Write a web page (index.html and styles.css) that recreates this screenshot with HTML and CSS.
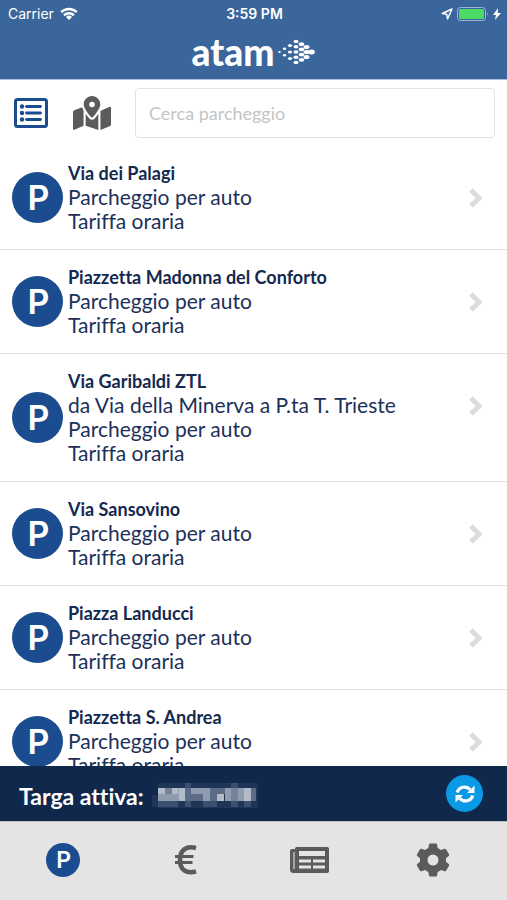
FILE: index.html
```html
<!DOCTYPE html>
<html lang="it">
<head>
<meta charset="utf-8">
<meta name="viewport" content="width=device-width, initial-scale=1">
<title>atam – Parcheggi</title>
<link rel="stylesheet" href="styles.css">
</head>
<body>
<div class="app">
  <header class="header">
    <div class="status">
      <div class="status-left"><span>Carrier</span>
        <svg width="18" height="14" viewBox="0 0 18 14" fill="none" stroke="#fff" stroke-width="2.4"><path d="M1.2 5.2a11 11 0 0 1 15.6 0M4 8.3a7 7 0 0 1 10 0"/><path d="M9 13 6 10a4.3 4.3 0 0 1 6 0z" fill="#fff" stroke="none"/></svg>
      </div>
      <strong>3:59 PM</strong>
      <div class="status-right">
        <svg width="12" height="12" viewBox="0 0 12 12" fill="none" stroke="#fff" stroke-width="1.4" stroke-linejoin="round"><path d="M11 1 1.2 5.5l4.6.8.7 4.6z"/></svg>
        <svg width="32" height="14" viewBox="0 0 32 14"><rect x=".5" y=".5" width="28" height="13" rx="3" fill="none" stroke="#9db4d2"/><rect x="2" y="2" width="25" height="10" rx="1.5" fill="#4cd964"/><path d="M30 5q1.600 2 0 4z" fill="#9db4d2"/></svg>
        <svg width="8" height="12" viewBox="0 0 8 12" fill="#fff"><path d="M5 0 0 7h3L2 12l6-7H4.700z"/></svg>
      </div>
    </div>
    <div class="brand"><span>atam</span>
      <svg width="37" height="26" viewBox="0 0 37 26" fill="#fff"><ellipse cx="1.500" cy="13" rx="1.300" ry="1"/><ellipse cx="6.500" cy="9.800" rx="1.700" ry="1.300"/><ellipse cx="6.500" cy="16.200" rx="1.700" ry="1.300"/><ellipse cx="12" cy="6.500" rx="2.100" ry="1.600"/><ellipse cx="12" cy="13" rx="2.100" ry="1.600"/><ellipse cx="12" cy="19.500" rx="2.100" ry="1.600"/><ellipse cx="18" cy="2.500" rx="2.500" ry="1.800"/><ellipse cx="18" cy="7.800" rx="2.500" ry="1.800"/><ellipse cx="18" cy="13" rx="2.500" ry="1.800"/><ellipse cx="18" cy="18.200" rx="2.500" ry="1.800"/><ellipse cx="18" cy="23.500" rx="2.500" ry="1.800"/><ellipse cx="23.500" cy="5.200" rx="2.800" ry="1.900"/><ellipse cx="23.500" cy="10.400" rx="2.800" ry="1.900"/><ellipse cx="23.500" cy="15.600" rx="2.800" ry="1.900"/><ellipse cx="23.500" cy="20.800" rx="2.800" ry="1.900"/><ellipse cx="28.500" cy="8" rx="3" ry="2"/><ellipse cx="28.500" cy="13" rx="3" ry="2"/><ellipse cx="28.500" cy="18" rx="3" ry="2"/><ellipse cx="33.500" cy="13" rx="3.400" ry="2.500"/></svg>
    </div>
  </header>

  <div class="toolbar">
    <button class="tool" type="button" aria-label="Elenco">
      <svg width="36" height="32" viewBox="0 0 36 32" fill="none" stroke="#1a4c8f" stroke-width="3"><rect x="2.500" y="2.500" width="31" height="27" rx="2"/><path d="M13.500 9.500h14M13.500 16h14M13.500 22.500h14" stroke-width="2.800" stroke-linecap="round"/><g fill="#1a4c8f" stroke="none"><circle cx="9" cy="9.500" r="2.200"/><circle cx="9" cy="16" r="2.200"/><circle cx="9" cy="22.500" r="2.200"/></g></svg>
    </button>
    <button class="tool" type="button" aria-label="Mappa">
      <svg width="38" height="34" viewBox="0 0 576 512" fill="#5b5b5b"><path d="M288 0c-69.600 0-126 56.400-126 126 0 56.300 82.300 158.800 113.900 196.000 6.400 7.500 17.800 7.500 24.200 0C331.700 284.800 414 182.300 414 126 414 56.400 357.600 0 288 0zm0 168a42 42 0 1 1 0-84 42 42 0 0 1 0 84zM20.100 216A32 32 0 0 0 0 245.700v250.300c0 11.300 11.400 19.100 21.900 14.900L160 448V214.900c-8.800-16-16.100-31.500-21.300-46.400zM288 359.700c-14.100 0-27.400-6.200-36.500-17-19.700-23.200-40.600-49.600-59.500-76.700v182l192 64V266c-18.900 27.100-39.800 53.500-59.500 76.700-9.200 10.800-22.500 17-36.500 17zm266.100-198.500L416 224v288l139.900-56A32 32 0 0 0 576 426.300V176c0-11.300-11.400-19.100-21.900-14.800z"/></svg>
    </button>
    <input class="search" type="search" placeholder="Cerca parcheggio" aria-label="Cerca parcheggio">
  </div>

  <main class="list">
    <a class="row" href="#"><span class="pin">P</span><span class="text"><b>Via dei Palagi</b><span>Parcheggio per auto</span><span>Tariffa oraria</span></span><svg class="chev" viewBox="0 0 16 22"><path d="m3 3 8 8-8 8"/></svg></a>
    <a class="row" href="#"><span class="pin">P</span><span class="text"><b>Piazzetta Madonna del Conforto</b><span>Parcheggio per auto</span><span>Tariffa oraria</span></span><svg class="chev" viewBox="0 0 16 22"><path d="m3 3 8 8-8 8"/></svg></a>
    <a class="row" href="#"><span class="pin">P</span><span class="text"><b>Via Garibaldi ZTL</b><span>da Via della Minerva a P.ta T. Trieste</span><span>Parcheggio per auto</span><span>Tariffa oraria</span></span><svg class="chev" viewBox="0 0 16 22"><path d="m3 3 8 8-8 8"/></svg></a>
    <a class="row" href="#"><span class="pin">P</span><span class="text"><b>Via Sansovino</b><span>Parcheggio per auto</span><span>Tariffa oraria</span></span><svg class="chev" viewBox="0 0 16 22"><path d="m3 3 8 8-8 8"/></svg></a>
    <a class="row" href="#"><span class="pin">P</span><span class="text"><b>Piazza Landucci</b><span>Parcheggio per auto</span><span>Tariffa oraria</span></span><svg class="chev" viewBox="0 0 16 22"><path d="m3 3 8 8-8 8"/></svg></a>
    <a class="row" href="#"><span class="pin">P</span><span class="text"><b>Piazzetta S. Andrea</b><span>Parcheggio per auto</span><span>Tariffa oraria</span></span><svg class="chev" viewBox="0 0 16 22"><path d="m3 3 8 8-8 8"/></svg></a>
  </main>

  <section class="plate">
    <div class="plate-info">
      <span>Targa attiva:</span>
      <svg width="108" height="28" viewBox="0 0 108 28"><path fill="#1f3558" d="M6 1h100v25H6zM0 13h6v12H0z"/><path fill="#3c4f70" d="M6 19h20v6H6zM33 1h6v24h-6zM51 19h14v6H51zM79 1h7v24h-7zM92 19h7v6h-7z"/><path fill="#5c6b86" d="M33 6h6v13h-6zM39 12h12v7H39zM58 6h7v13h-7zM65 6h8v6h-8zM99 6h5v13h-5z"/><path fill="#8f9bae" d="M6 6h27v13H6zM39 6h19v6H39zM51 12h7v7h-7zM73 6h26v13H73z"/><path fill="#b3bbc9" d="M6 6h7v6H6zM20 6h6v6h-6zM27 6h6v13h-6zM65 12h7v7h-7zM92 6h7v13h-7z"/><path fill="#75829a" d="M13 6h7v6h-7zM79 6h7v13h-7z"/></svg>
    </div>
    <button class="refresh" type="button" aria-label="Aggiorna">
      <svg width="20" height="20" viewBox="0 0 20 20"><path d="M2.200 8.500a7.500 7.500 0 0 1 13-2.700M17.800 11.500a7.500 7.500 0 0 1-13 2.700" fill="none" stroke="#fff" stroke-width="3.200"/><path d="M19.500 1.500v7.500H12zM.5 18.500V11H8z" fill="#fff"/></svg>
    </button>
  </section>

  <nav class="tabs">
    <a href="#" aria-label="Parcheggi"><span class="pin small">P</span></a>
    <a href="#" aria-label="Pagamenti"><svg width="24" height="32" viewBox="0 0 24 32" fill="none" stroke="#5b5b5b"><path d="M22 4C12 1.500 6 6 6 16s6 14 16 11.500" stroke-width="4.600"/><path d="M1 12.500h18.500M1 18.500h17.500" stroke-width="3"/></svg></a>
    <a href="#" aria-label="Notizie"><svg width="40" height="26" viewBox="0 0 40 26"><path fill="#5b5b5b" fill-rule="evenodd" d="M6.500 0H37a2 2 0 0 1 2 2v22a2 2 0 0 1-2 2H3.500A3.500 3.500 0 0 1 0 22.500V4a2 2 0 0 1 2-2h3V1.500A1.500 1.500 0 0 1 6.500 0zM9 4v5h26V4zM9 12.500v3h12v-3zM23 12.500v3h12v-3zM9 18.500v3h12v-3zM23 18.500v3h12v-3z"/><path d="M4 5v17" stroke="#a5a5a5" stroke-width="2"/></svg></a>
    <a href="#" aria-label="Impostazioni"><svg width="34" height="34" viewBox="0 0 34 34"><path fill="#5b5b5b" fill-rule="evenodd" d="M13 1.500q0-1 1-1h6q1 0 1 1l.7 3.500 3.300 2 3.500-1.200q1-.3 1.500.5l3 5q.5 1-.3 1.600L30 15.200v3.600l2.700 2.300q.8.600.3 1.600l-3 5q-.5.800-1.500.5L25 27l-3.300 2-.7 3.500q0 1-1 1h-6q-1 0-1-1l-.7-3.500L9 27l-3.500 1.200q-1 .3-1.500-.5l-3-5q-.5-1 .3-1.600L4 18.800v-3.600l-2.700-2.300q-.8-.6-.3-1.600l3-5q.5-.8 1.500-.5L9 7l3.300-2zM17 11.500a5.500 5.500 0 1 0 0 11 5.500 5.500 0 0 0 0-11z"/></svg></a>
  </nav>
</div>
</body>
</html>
```
FILE: styles.css
```css
* { box-sizing: border-box; }
body { margin: 0; background: #fff; color: #1c3159; font-family: Lato, "Liberation Sans", sans-serif; font-variant-ligatures: none; }
.app { display: flex; flex-direction: column; height: 100vh; overflow: hidden; }
svg { display: block; flex: none; }
a { color: inherit; text-decoration: none; }
button { border: 0; padding: 0; background: none; }

.header { flex: none; height: 80px; background: #3a669c; color: #fff; border-bottom: 1px solid #a9bdd6; }
.status { display: grid; grid-template-columns: 1fr auto 1fr; align-items: center; height: 28px; padding: 0 6px 0 8px; font: 14px/28px Inter, sans-serif; }
.status strong { font-weight: 600; }
.status-left, .status-right { display: flex; align-items: center; gap: 6px; }
.status-right { justify-content: flex-end; gap: 4px; }
.brand { display: flex; justify-content: center; align-items: center; gap: 4px; height: 47px; font-size: 37px; font-weight: 900; line-height: 40px; }

.toolbar { flex: none; display: flex; align-items: center; height: 66px; padding: 0 12px 0 13px; gap: 24px; }
.search { flex: 1; min-width: 0; height: 50px; padding: 0 13px; border: 1px solid #e2e2e2; border-radius: 4px; background: #fff; font: 18px "Lato", sans-serif; outline: 0; appearance: none; }
.search::placeholder { color: #c4c4c4; }

.list { flex: 1; min-height: 0; overflow: hidden; }
.row { display: flex; align-items: center; padding: 15px 23px 16px 12px; border-bottom: 1px solid #e3e3e3; }
.pin { flex: none; display: grid; place-items: center; width: 51px; height: 51px; padding-left: 2px; border-radius: 50%; background: #1a4c8f; color: #fff; font: 600 34px/51px Inter, sans-serif; }
.text { flex: 1; min-width: 0; padding-left: 5px; font-size: 21px; line-height: 24px; }
.text b, .text span { display: block; }
.text b { color: #14294f; font-size: 18px; }
.chev { align-self: flex-start; width: 16px; height: 22px; margin-top: 26px; fill: none; stroke: #dcdcdc; stroke-width: 5; }

.plate { flex: none; display: flex; align-items: center; justify-content: space-between; height: 55px; padding: 0 24px 0 19px; background: #10284c; color: #fff; font-size: 23px; font-weight: 700; }
.plate-info { display: flex; align-items: center; gap: 8px; padding-top: 5px; }
.refresh { display: grid; place-items: center; width: 37px; height: 37px; border-radius: 50%; background: #0a99e4; }
.tabs { flex: none; display: grid; grid-template-columns: repeat(4, 1fr); height: 79px; padding: 0 12px 2px 1px; background: #e4e4e4; border-top: 1px solid #c4c4c4; }
.tabs a { display: grid; place-items: center; }
.pin.small { width: 34px; height: 34px; font-size: 23px; line-height: 34px; }
```
